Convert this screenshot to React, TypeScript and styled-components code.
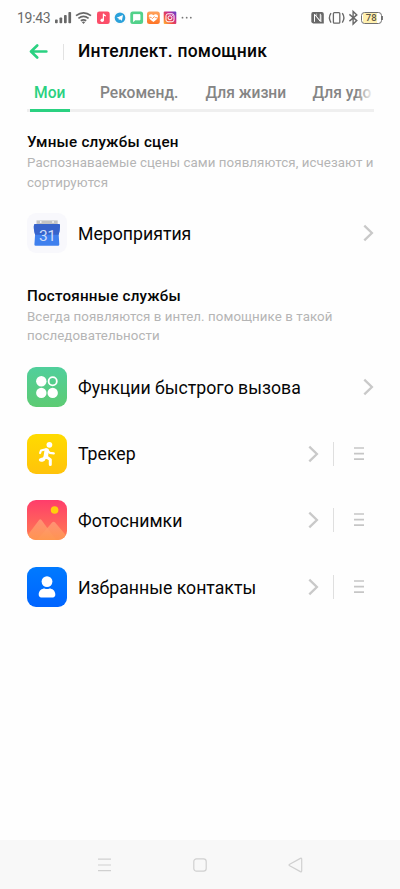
import React from "react";
import styled, { createGlobalStyle } from "styled-components";

const GlobalStyle = createGlobalStyle`
  * { box-sizing: border-box; }
  body { margin: 0; background: #fefefe; font-family: Roboto, "Noto Sans", sans-serif; color: #060606; }
  svg { display: block; flex: none; }
`;

const Screen = styled.div`
  display: flex;
  flex-direction: column;
  width: 400px;
  height: 889px;
  overflow: hidden;
`;

const StatusBar = styled.header`
  display: flex;
  justify-content: space-between;
  height: 35px;
  padding: 0 17px;
`;

const StatusGroup = styled.div`
  display: flex;
  align-items: center;
`;

const Clock = styled.span`
  width: 38px;
  font-size: 14px;
  line-height: 35px;
  letter-spacing: -0.3px;
  color: #6b6b6b;
  padding-top: 2px;
  white-space: nowrap;
`;

const TitleBar = styled.div`
  display: flex;
  align-items: center;
  height: 33px;
  padding-left: 29px;
`;

const TitleDivider = styled.span`
  width: 1px;
  height: 16px;
  margin: 0 14px 0 15px;
  background: #e2e2e2;
`;

const Title = styled.h1`
  margin: 0;
  font-size: 17.5px;
  font-weight: 500;
  line-height: 33px;
  letter-spacing: 0.24px;
  white-space: nowrap;
`;

const Tabs = styled.nav`
  display: flex;
  width: 347px;
  height: 44px;
  margin-left: 27px;
  overflow: hidden;
  border-bottom: 3px solid #efefef;
  padding-left: 3px;
  position: relative;
`;

const TabFade = styled.span`
  position: absolute;
  right: 0;
  top: 0;
  width: 18px;
  height: 41px;
  background: linear-gradient(to right, rgba(254, 254, 254, 0), #fefefe 100%);
`;

const TabList = styled.div`
  display: flex;
  gap: 26.5px;
  margin-left: 4px;
`;

const Tab = styled.span<{ $active?: boolean; $width: number }>`
  flex: none;
  width: ${(p) => p.$width}px;
  line-height: 50px;
  font-size: 15.6px;
  font-weight: 500;
  white-space: nowrap;
  color: ${(p) => (p.$active ? "#2ad181" : "#858585")};
`;

const TabTrack = styled.div`
  width: 347px;
  height: 3px;
  margin: -3px 0 0 27px;
  padding-left: 3px;
  z-index: 1;
`;

const TabIndicator = styled.div`
  width: 40px;
  height: 3px;
  background: #2ad181;
`;

const Section = styled.section<{ $top: number }>`
  padding: ${(p) => p.$top}px 26px 0 27px;
`;

const SectionTitle = styled.h2`
  margin: 0;
  font-size: 15.2px;
  font-weight: 500;
  line-height: 20px;
  letter-spacing: 0.22px;
  white-space: nowrap;
`;

const SectionText = styled.p`
  margin: 1px 0 0;
  font-size: 13.3px;
  line-height: 19.5px;
  letter-spacing: 0.07px;
  color: #b5b5b5;
  white-space: nowrap;
`;

const List = styled.div`
  display: flex;
  flex-direction: column;
  padding-top: 8px;
`;

const Row = styled.div`
  display: flex;
  align-items: center;
  height: 66.7px;
`;

const RowLabel = styled.span`
  flex: 1;
  margin-left: 11px;
  padding-top: 1px;
  font-size: 17.7px;
  line-height: 26px;
  white-space: nowrap;
`;

const RowActions = styled.div`
  display: flex;
  align-items: center;
  padding-right: 10px;
`;

const ActionDivider = styled.span`
  width: 1px;
  height: 24px;
  margin: 0 20px 0 14px;
  background: #dfdfdf;
`;

const NavBar = styled.footer`
  display: flex;
  align-items: center;
  justify-content: space-between;
  height: 49px;
  margin-top: auto;
  padding: 0 97px;
  background: #f8f8f8;
`;

const Chevron = () => (
  <svg width="12" height="18" viewBox="0 0 12 18" fill="none" stroke="#c9c9c9" strokeWidth="2.3">
    <path d="M2.3 1.6 9.9 9 2.3 16.4" />
  </svg>
);

const Handle = () => (
  <svg width="10" height="14" viewBox="0 0 10 14" stroke="#c6c6c6" strokeWidth="1.7">
    <path d="M0 1h10M0 6.6h10M0 12.2h10" />
  </svg>
);

const StatusLeftIcons = () => (
  <svg width="140" height="18" viewBox="55 9 140 18">
    <defs>
      <linearGradient id="insta" x1="0" y1="1" x2="1" y2="0">
        <stop offset="0" stopColor="#ffbd35" />
        <stop offset=".35" stopColor="#f14c43" />
        <stop offset=".65" stopColor="#c42a91" />
        <stop offset="1" stopColor="#5545d2" />
      </linearGradient>
      <linearGradient id="heart" x2="0" y2="1">
        <stop stopColor="#ffa35c" />
        <stop offset="1" stopColor="#ff7425" />
      </linearGradient>
    </defs>
    <g fill="#686868">
      <rect x="55" y="19.5" width="2.7" height="3.7" rx=".8" />
      <rect x="59.5" y="17.5" width="2.7" height="5.7" rx=".8" />
      <rect x="64" y="15" width="2.7" height="8.2" rx=".8" />
      <rect x="68.4" y="12" width="2.7" height="11.2" rx=".8" />
    </g>
    <g fill="none" stroke="#686868" strokeWidth="1.7">
      <path d="M76 15.7q7.5-5.8 15 0" />
      <path d="M78.4 18.3q5.1-4 10.2 0" />
      <path d="M80.8 20.8q2.7-2 5.4 0" />
    </g>
    <path d="m81.8 22 1.7 1.9 1.7-1.9q-1.7-1-3.4 0z" fill="#686868" />
    <rect x="97" y="11.5" width="12.7" height="12.5" rx="2.3" fill="#fb4e69" />
    <path d="M103.4 20.2v-6.4q.6 1.7 2.5 2.2" fill="none" stroke="#fff" strokeWidth="1.2" />
    <circle cx="102.2" cy="20.3" r="1.7" fill="#fff" />
    <rect x="113.8" y="11.6" width="12.5" height="12.5" rx="3" fill="#fafafa" />
    <circle cx="120" cy="17.8" r="5.3" fill="#2ba1da" />
    <path d="m116.6 17.7 6.4-2.6-1.1 5.6-2-1.4-1 .9-.2-1.8z" fill="#fff" />
    <rect x="130.3" y="11.5" width="12.8" height="12.5" rx="2.5" fill="#52d18a" />
    <path d="M133.5 14.5h6.5v5.4h-4.7l-1.8 1.7z" fill="#fff" stroke="#fff" strokeWidth=".8" strokeLinejoin="round" />
    <rect x="147" y="11.5" width="12.8" height="12.5" rx="2.5" fill="url(#heart)" />
    <path d="M153.4 22.1c-2.2-1.4-4.6-3.4-4.6-5.5 0-2.6 3-3.2 4.6-1.3 1.6-1.9 4.6-1.3 4.6 1.3 0 2.1-2.4 4.1-4.6 5.5z" fill="#fff" />
    <path d="m149.2 17.2 2 .2 1.2 1.2 2-2 1 1.1h2" fill="none" stroke="#ff904d" strokeWidth=".9" />
    <rect x="163.7" y="11.5" width="12.6" height="12.5" rx="1" fill="url(#insta)" />
    <rect x="166" y="13.8" width="8" height="8" rx="2" fill="none" stroke="#fff" strokeWidth="1" />
    <circle cx="170" cy="17.8" r="2" fill="none" stroke="#fff" />
    <circle cx="172.4" cy="15.6" r=".5" fill="#fff" />
    <g fill="#777">
      <circle cx="182.5" cy="17.7" r=".9" />
      <circle cx="186.7" cy="17.7" r=".9" />
      <circle cx="190.8" cy="17.7" r=".9" />
    </g>
  </svg>
);

const StatusRightIcons = () => (
  <svg width="50" height="18" viewBox="311 9 50 18" fill="none" stroke="#686868">
    <path d="M313 12h8.8q2 0 2 2v9.6h-10.5q-2-.3-2-2V14q0-2 1.7-2z" fill="#686868" stroke="none" />
    <path d="M314.5 21.8v-7.6l5.8 7.2v-7.6" stroke="#fff" strokeWidth="1" />
    <path d="M316.6 13.6v3l4.6 5.2v-7" stroke="#fff" strokeWidth=".5" />
    <rect x="333.4" y="12.6" width="6.4" height="10.6" rx="1" strokeWidth="1.3" />
    <path d="M331 13.2q-3.2 4.7 0 9.4M342.3 13.2q3.2 4.7 0 9.4" strokeWidth="1.4" />
    <path d="m349.4 14.4 7.4 6.2-3.7 3.5V11.4l3.7 3.5-7.4 6.2" strokeWidth="1.4" />
  </svg>
);

const BatteryShell = styled.div`
  display: flex;
  align-items: center;
`;

const Battery = styled.div`
  display: flex;
  justify-content: center;
  width: 21px;
  height: 12px;
  margin-top: 1px;
  border: 1px solid #707070;
  border-radius: 3.5px;
  background: linear-gradient(to right, #fff 1px, #fff0af 1px, #fff0af 78%, #fff 78%);
  font-size: 9.5px;
  font-weight: 500;
  line-height: 10.5px;
  color: #5c5545;
`;

const BatteryTip = styled.span`
  width: 1.3px;
  height: 4px;
  background: #777;
`;

const CalendarIcon = () => (
  <svg width="40" height="40" viewBox="0 0 40 40">
    <rect width="40" height="40" rx="9" fill="#f8f8fc" />
    <path d="M9.5 7.4h21.2v5H9.5z" fill="#c3c3c4" />
    <path d="M13 9h1.5M25.3 9h1.5" stroke="#fff" strokeWidth="1.5" />
    <path d="M8 11h24q1.2 0 1 2-.2 5-1.3 8.5l.6 10q0 1.3-1.3 1.3H8.7q-1.3 0-1.3-1.3l.7-10Q6.4 15 7 12.2z" fill="#3f80ee" />
    <path d="M8 11h24q1.2 0 1 2-.2 5-1.3 8.8H8.1Q6.2 15 7 12q0-1 1-1z" fill="#3763cb" />
    <text x="20.2" y="28" textAnchor="middle" fontFamily="Roboto" fontSize="15.5" letterSpacing="-.6" fill="#cfddf8">31</text>
  </svg>
);

const QuickIcon = () => (
  <svg width="40" height="40" viewBox="0 0 40 40">
    <defs><linearGradient id="quick" x2="0" y2="1"><stop stopColor="#50cf9c" /><stop offset="1" stopColor="#5dcb73" /></linearGradient></defs>
    <rect width="40" height="40" rx="9" fill="url(#quick)" />
    <g fill="#fff"><circle cx="14.3" cy="14.3" r="5.2" /><circle cx="14.3" cy="25.9" r="5.2" /><circle cx="25.7" cy="25.9" r="5.2" /></g>
    <circle cx="25.7" cy="14.3" r="4.1" fill="none" stroke="#fff" strokeWidth="1.8" />
  </svg>
);

const TrackerIcon = () => (
  <svg width="40" height="40" viewBox="0 0 40 40">
    <defs><linearGradient id="track" x2="0" y2="1"><stop stopColor="#ffdb00" /><stop offset="1" stopColor="#ffc30b" /></linearGradient></defs>
    <rect width="40" height="40" rx="9" fill="url(#track)" />
    <circle cx="22.4" cy="10.8" r="2.9" fill="#fff" />
    <g fill="none" stroke="#fff" strokeLinecap="round" strokeLinejoin="round">
      <path d="m13.1 19 .9-2.5 5-1.2 3.8 3.5 4 .5" strokeWidth="2.2" />
      <path d="m19.7 16.5-1 6.5" strokeWidth="4.5" />
      <path d="m19 22.5 4.3 3.1v5" strokeWidth="3" />
      <path d="m17.3 23.6-1.2 1.8" strokeWidth="2.5" />
    </g>
    <ellipse cx="15" cy="25.7" rx="3.2" ry="2" transform="rotate(-12 15 25.7)" fill="#fff" />
  </svg>
);

const PhotoIcon = () => (
  <svg width="40" height="40" viewBox="0 0 40 40">
    <defs>
      <linearGradient id="photo" x2="0" y2="1"><stop stopColor="#ff3d6b" /><stop offset="1" stopColor="#ff7d50" /></linearGradient>
      <linearGradient id="peak" x2="0" y2="1"><stop stopColor="#ff9a7a" /><stop offset="1" stopColor="#ff9850" /></linearGradient>
      <clipPath id="photoClip"><rect width="40" height="40" rx="9" /></clipPath>
    </defs>
    <g clipPath="url(#photoClip)">
      <rect width="40" height="40" fill="url(#photo)" />
      <circle cx="27.6" cy="10" r="3.8" fill="#ffcf0d" />
      <path d="M-3 40 12.1 20q1.2-1.3 2.4 0L29 40z" fill="url(#peak)" opacity=".85" />
      <path d="M10 40 25.3 22.3q1.3-1.3 2.6 0L43 40z" fill="url(#peak)" opacity=".85" />
    </g>
  </svg>
);

const ContactIcon = () => (
  <svg width="40" height="40" viewBox="0 0 40 40">
    <defs><linearGradient id="contact" x2="0" y2="1"><stop stopColor="#007aff" /><stop offset="1" stopColor="#0064ff" /></linearGradient></defs>
    <rect width="40" height="40" rx="9" fill="url(#contact)" />
    <circle cx="20" cy="14.6" r="5.4" fill="#fff" />
    <path d="M11.7 27.6c0-4 3.2-6 5.8-6q2.5 1 5 0c2.6 0 5.8 2 5.8 6q0 2.8-2.5 2.8H14.2q-2.5 0-2.5-2.8z" fill="#fff" />
  </svg>
);

const services = [
  { label: "Трекер", Icon: TrackerIcon },
  { label: "Фотоснимки", Icon: PhotoIcon },
  { label: "Избранные контакты", Icon: ContactIcon },
];

export default function App() {
  return (
    <Screen>
      <GlobalStyle />
      <StatusBar>
        <StatusGroup><Clock>19:43</Clock><StatusLeftIcons /></StatusGroup>
        <StatusGroup>
          <StatusRightIcons />
          <BatteryShell><Battery>78</Battery><BatteryTip /></BatteryShell>
        </StatusGroup>
      </StatusBar>
      <TitleBar>
        <svg width="19" height="16" viewBox="0 0 19 16" fill="none" stroke="#2ad181" strokeWidth="2.6" strokeLinecap="round" strokeLinejoin="round">
          <path d="M8.2 1.5 2 7.5l6.2 6M2.4 7.5h15" />
        </svg>
        <TitleDivider />
        <Title>Интеллект. помощник</Title>
      </TitleBar>
      <Tabs>
        <TabList>
          <Tab $active $width={39.5}>Мои</Tab>
          <Tab $width={79}>Рекоменд.</Tab>
          <Tab $width={80.5}>Для жизни</Tab>
          <Tab $width={62}>Для удо</Tab>
        </TabList>
        <TabFade />
      </Tabs>
      <TabTrack><TabIndicator /></TabTrack>
      <Section $top={20}>
        <SectionTitle>Умные службы сцен</SectionTitle>
        <SectionText>Распознаваемые сцены сами появляются, исчезают и<br />сортируются</SectionText>
        <List>
          <Row><CalendarIcon /><RowLabel>Мероприятия</RowLabel><Chevron /></Row>
        </List>
      </Section>
      <Section $top={19}>
        <SectionTitle>Постоянные службы</SectionTitle>
        <SectionText>Всегда появляются в интел. помощнике в такой<br />последовательности</SectionText>
        <List>
          <Row><QuickIcon /><RowLabel>Функции быстрого вызова</RowLabel><Chevron /></Row>
          {services.map(({ label, Icon }) => (
            <Row key={label}>
              <Icon />
              <RowLabel>{label}</RowLabel>
              <RowActions><Chevron /><ActionDivider /><Handle /></RowActions>
            </Row>
          ))}
        </List>
      </Section>
      <NavBar>
        <svg width="15" height="14" viewBox="0 0 15 14" stroke="#d0d0d0" strokeWidth="1.2"><path d="M1 1.2h13M1 7h13M1 12.6h13" /></svg>
        <svg width="14" height="14" viewBox="0 0 14 14" fill="none" stroke="#d0d0d0" strokeWidth="1.2"><rect x=".8" y=".8" width="12.4" height="12.4" rx="2.7" /></svg>
        <svg width="15" height="16" viewBox="0 0 15 16" fill="none" stroke="#d0d0d0" strokeWidth="1.2" strokeLinejoin="round"><path d="M13.7 2.2v11.6q0 1.4-1.3.8L1.7 8.8q-1.3-.8 0-1.6L12.4 1.4q1.3-.6 1.3.8z" /></svg>
      </NavBar>
    </Screen>
  );
}
